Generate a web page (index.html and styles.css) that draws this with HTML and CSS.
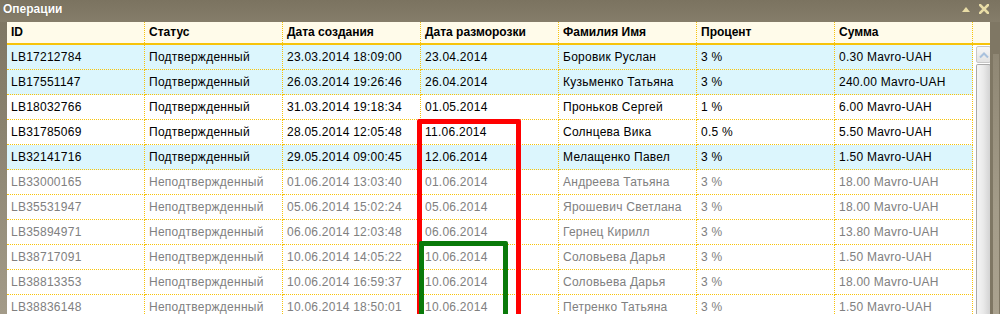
FILE: index.html
```html
<!DOCTYPE html>
<html lang="ru">
<head>
<meta charset="utf-8">
<title>Операции</title>
<link rel="stylesheet" href="styles.css">
</head>
<body>
<div class="window">
  <div class="titlebar">
    <span class="title">Операции</span>
    <span class="tools">
      <svg width="8" height="6" viewBox="0 0 8 6"><path d="M0 6 L4 1 L8 6 Z" fill="#e9dda6"/></svg>
      <svg width="10" height="10" viewBox="0 0 10 10"><path d="M1 1 L9 9 M9 1 L1 9" stroke="#e9dda6" stroke-width="2.6" stroke-linecap="square"/></svg>
    </span>
  </div>
  <div class="main">
    <div class="content">
      <div class="thead">
        <div class="th">ID</div>
        <div class="th">Статус</div>
        <div class="th">Дата создания</div>
        <div class="th">Дата разморозки</div>
        <div class="th">Фамилия Имя</div>
        <div class="th">Процент</div>
        <div class="th">Сумма</div>
        <div class="th filler"></div>
      </div>
      <div class="tbody">
        <div class="rows">
          <div class="row blue"><div>LB17212784</div><div>Подтвержденный</div><div>23.03.2014 18:09:00</div><div>23.04.2014</div><div>Боровик Руслан</div><div>3 %</div><div>0.30 Mavro-UAH</div></div>
          <div class="row blue"><div>LB17551147</div><div>Подтвержденный</div><div>26.03.2014 19:26:46</div><div>26.04.2014</div><div>Кузьменко Татьяна</div><div>3 %</div><div>240.00 Mavro-UAH</div></div>
          <div class="row"><div>LB18032766</div><div>Подтвержденный</div><div>31.03.2014 19:18:34</div><div>01.05.2014</div><div>Проньков Сергей</div><div>1 %</div><div>6.00 Mavro-UAH</div></div>
          <div class="row"><div>LB31785069</div><div>Подтвержденный</div><div>28.05.2014 12:05:48</div><div>11.06.2014</div><div>Солнцева Вика</div><div>0.5 %</div><div>5.50 Mavro-UAH</div></div>
          <div class="row blue"><div>LB32141716</div><div>Подтвержденный</div><div>29.05.2014 09:00:45</div><div>12.06.2014</div><div>Мелащенко Павел</div><div>3 %</div><div>1.50 Mavro-UAH</div></div>
          <div class="row muted"><div>LB33000165</div><div>Неподтвержденный</div><div>01.06.2014 13:03:40</div><div>01.06.2014</div><div>Андреева Татьяна</div><div>3 %</div><div>18.00 Mavro-UAH</div></div>
          <div class="row muted"><div>LB35531947</div><div>Неподтвержденный</div><div>05.06.2014 15:02:24</div><div>05.06.2014</div><div>Ярошевич Светлана</div><div>3 %</div><div>18.00 Mavro-UAH</div></div>
          <div class="row muted"><div>LB35894971</div><div>Неподтвержденный</div><div>06.06.2014 12:03:48</div><div>06.06.2014</div><div>Гернец Кирилл</div><div>3 %</div><div>13.80 Mavro-UAH</div></div>
          <div class="row muted"><div>LB38717091</div><div>Неподтвержденный</div><div>10.06.2014 14:05:22</div><div>10.06.2014</div><div>Соловьева Дарья</div><div>3 %</div><div>1.50 Mavro-UAH</div></div>
          <div class="row muted"><div>LB38813353</div><div>Неподтвержденный</div><div>10.06.2014 16:59:37</div><div>10.06.2014</div><div>Соловьева Дарья</div><div>3 %</div><div>18.00 Mavro-UAH</div></div>
          <div class="row muted"><div>LB38836148</div><div>Неподтвержденный</div><div>10.06.2014 18:50:01</div><div>10.06.2014</div><div>Петренко Татьяна</div><div>3 %</div><div>1.50 Mavro-UAH</div></div>
        </div>
        <div class="scrollbar">
          <div class="sb-up">
            <svg width="10" height="6" viewBox="0 0 10 6"><path d="M1 5.5 L5 1.5 L9 5.5" fill="none" stroke="#a9c1dd" stroke-width="2"/></svg>
          </div>
          <div class="sb-track"></div>
        </div>
        <div class="mark red"></div>
        <div class="mark green"></div>
      </div>
    </div>
    <div class="outer-scroll"><div class="outer-thumb"></div></div>
  </div>
</div>
</body>
</html>
```
FILE: styles.css
```css
html, body {
  margin: 0;
  padding: 0;
}
body {
  width: 1000px;
  height: 314px;
  overflow: hidden;
  background: linear-gradient(180deg, #7c7461 0%, #8a826f 40%, #a39b89 100%);
  font-family: "Liberation Sans", Arial, sans-serif;
  font-size: 12px;
  color: #000;
}
.window {
  display: flex;
  flex-direction: column;
  height: 314px;
}
.titlebar {
  height: 22px;
  display: flex;
  align-items: center;
  justify-content: space-between;
  padding: 0 11px 4px 3px;
  box-sizing: border-box;
  background: linear-gradient(180deg, #7b7360 0%, #857d6a 100%);
}
.title {
  color: #fff;
  font-weight: bold;
  font-size: 12px;
  text-shadow: 0 0 1px rgba(0,0,0,0.3);
}
.tools {
  display: flex;
  align-items: center;
  gap: 9px;
}
.tools svg {
  display: block;
}
.main {
  display: flex;
  flex: 1;
  min-height: 0;
  padding-left: 7px;
}
.content {
  width: 983px;
  background: #fff;
  display: flex;
  flex-direction: column;
  overflow: hidden;
}
.thead {
  display: grid;
  grid-template-columns: repeat(7, 138px) 17px;
  background: #fffbea;
  border-bottom: 2px solid #f7c30a;
  height: 21px;
  flex: none;
}
.th {
  font-weight: bold;
  line-height: 21px;
  padding-left: 4px;
  border-right: 1px dotted #f7c30a;
  white-space: nowrap;
}
.th.filler {
  border-right: none;
}
.tbody {
  position: relative;
  display: flex;
  flex: 1;
  min-height: 0;
}
.rows {
  width: 966px;
  flex: none;
}
.row {
  display: grid;
  grid-template-columns: repeat(7, 138px);
  height: 25px;
}
.row > div {
  box-sizing: border-box;
  height: 25px;
  line-height: 24px;
  padding-left: 4px;
  letter-spacing: 0.25px;
  border-right: 1px dotted #f7c30a;
  border-bottom: 1px dotted #f7c30a;
  white-space: nowrap;
  overflow: hidden;
}
.row.blue {
  background: #dcf6fd;
}
.row.muted {
  color: #808080;
}
.scrollbar {
  margin-left: 3px;
  width: 15px;
  display: flex;
  flex-direction: column;
  flex: none;
}
.sb-up {
  height: 17px;
  box-sizing: border-box;
  border: 1px solid #c7c7c7;
  border-radius: 2px;
  background: linear-gradient(180deg, #f7f7f7, #e2e2e2);
  display: flex;
  align-items: center;
  justify-content: center;
  margin-top: 1px;
}
.sb-track {
  flex: 1;
  margin-top: 1px;
  box-sizing: border-box;
  border: 1px solid #a9a9a9;
  border-bottom: none;
  border-radius: 2px 2px 0 0;
  background: linear-gradient(90deg, #f6f6f6 0%, #e9e9e9 50%, #d3d3d3 100%);
}
.mark {
  position: absolute;
  box-sizing: border-box;
  border-radius: 2px;
}
.mark.red {
  left: 410px;
  top: 74px;
  width: 104px;
  height: 260px;
  border: 5px solid #ff0000;
}
.mark.green {
  left: 412px;
  top: 196px;
  width: 89px;
  height: 200px;
  border: 5px solid #0a7a0a;
}
.outer-scroll {
  width: 10px;
  display: flex;
  flex-direction: column;
  padding: 32px 1px 0 3px;
  box-sizing: border-box;
  background: #7f7764;
}
.outer-thumb {
  flex: 1;
  background: linear-gradient(180deg, #8f8774 0%, #a49c89 60%, #aaa28f 100%);
}
```
